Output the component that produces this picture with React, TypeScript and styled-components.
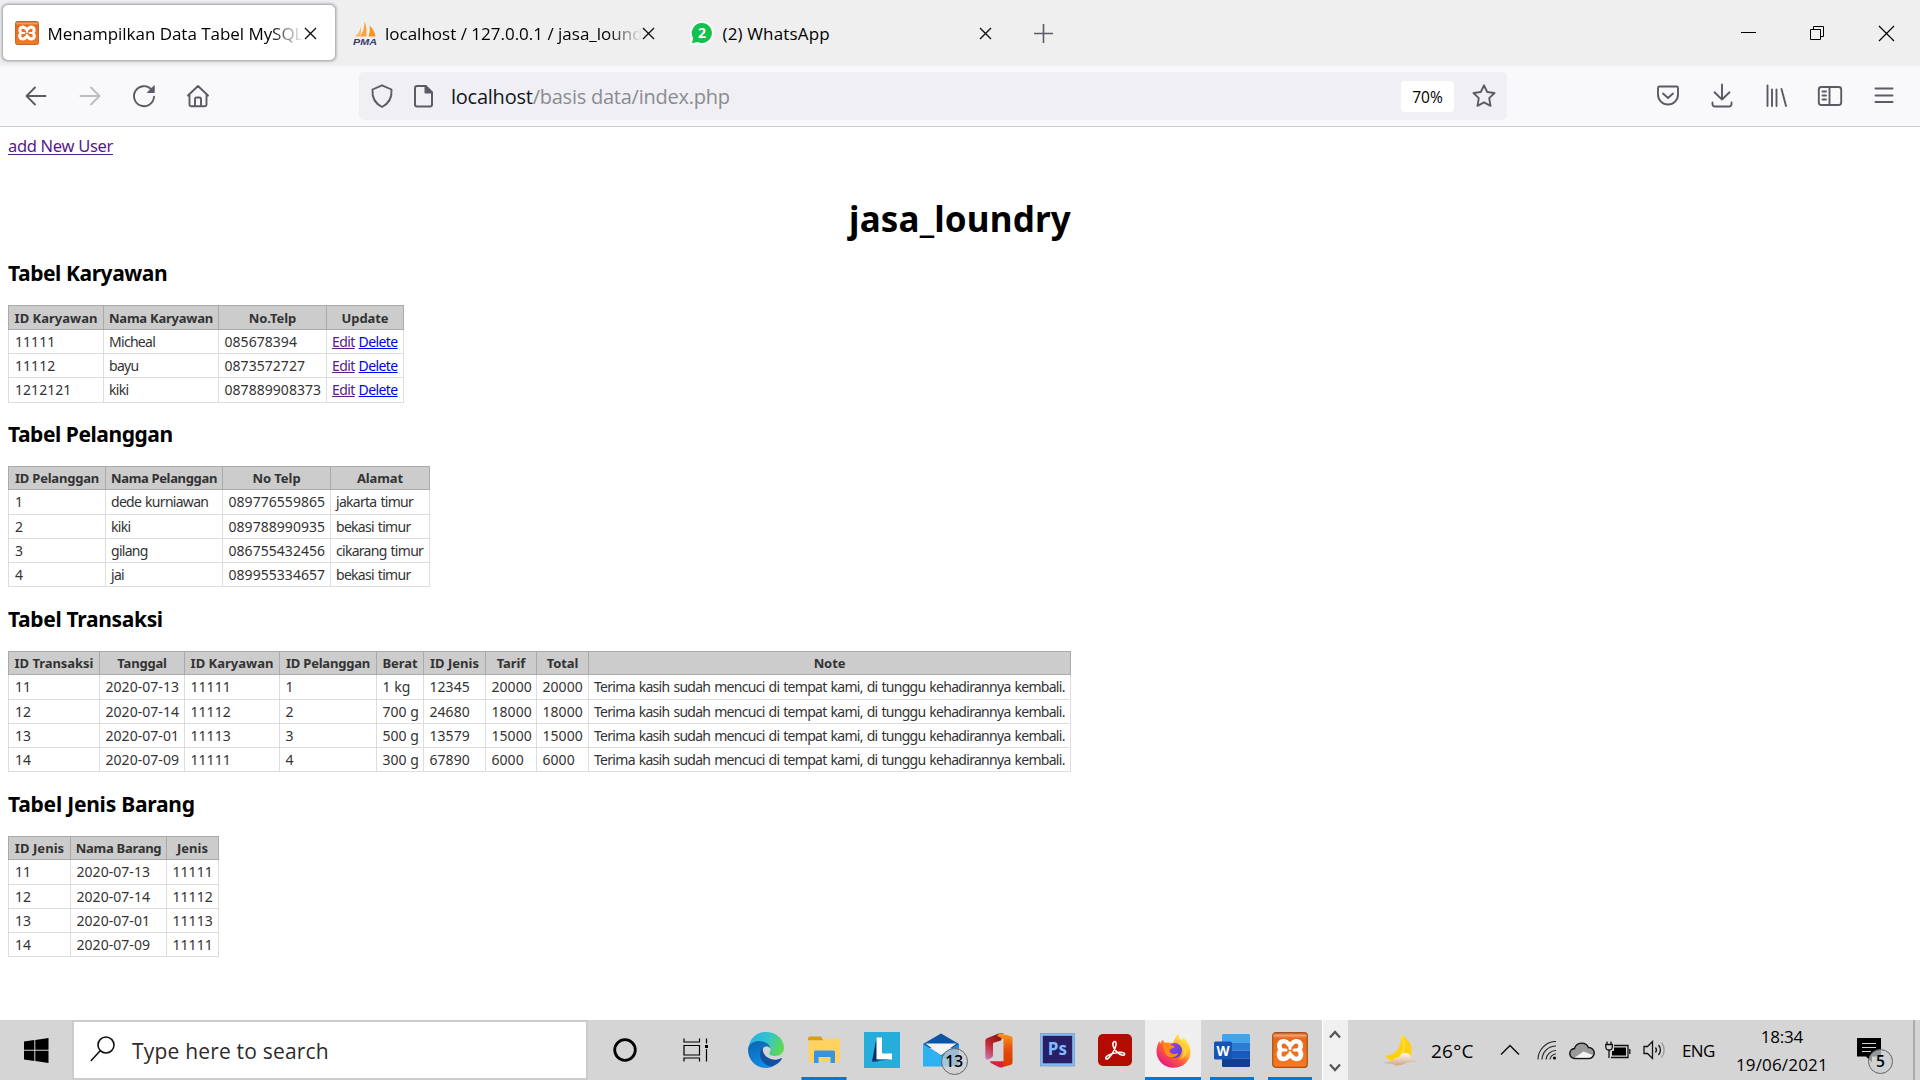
import React from "react";
import styled, { createGlobalStyle, css } from "styled-components";

const UI = `"Open Sans", "Noto Sans", sans-serif`;
const DOC = `"Noto Sans", "Open Sans", sans-serif`;

const Global = createGlobalStyle`
  *, *::before, *::after { box-sizing: border-box; }
  html, body { margin: 0; padding: 0; }
  body { width: 1920px; height: 1080px; overflow: hidden; background: #fff; }
  svg { display: block; flex: none; }
`;

const Screen = styled.div`
  display: flex;
  flex-direction: column;
  width: 1920px;
  height: 1080px;
  font-family: ${UI};
  color: #000;
`;

/* ---------- tab strip ---------- */
const TabStrip = styled.div`
  display: flex;
  height: 66px;
  background: #efefef;
  padding: 5px 0 5px 3px;
`;
const Tab = styled.div<{ $active?: boolean }>`
  display: flex;
  align-items: center;
  width: 332px;
  height: 55px;
  margin-right: 5.5px;
  padding: 1px 18px 0 12px;
  border-radius: 5px;
  ${(p) => p.$active && css`background: #fff; box-shadow: 0 0 3px 0.5px rgba(90, 90, 110, 0.6);`}
`;
const TabTitle = styled.div<{ $fade?: boolean; $ls?: number }>`
  flex: 1;
  overflow: hidden;
  margin-left: 8.5px;
  padding-top: 1px;
  font-size: 17px;
  line-height: 26px;
  letter-spacing: ${(p) => p.$ls ?? 0}px;
  white-space: nowrap;
  ${(p) => p.$fade && css`mask-image: linear-gradient(to right, #000 calc(100% - 34px), transparent 100%);`}
`;
const NewTab = styled.div`
  display: flex;
  align-items: center;
  margin-left: 18px;
  padding-top: 1px;
`;
const WindowControls = styled.div`
  display: flex;
  align-items: center;
  gap: 53px;
  margin-left: auto;
  padding-right: 25px;
`;

/* ---------- toolbar ---------- */
const Toolbar = styled.div`
  display: flex;
  align-items: center;
  height: 61px;
  padding: 0 20px 0 20px;
  background: #f9f9fb;
  border-bottom: 1px solid #cccccf;
`;
const NavButtons = styled.div`
  display: flex;
  gap: 22px;
  width: 339px;
`;
const UrlBar = styled.div`
  display: flex;
  align-items: center;
  width: 1148px;
  height: 48px;
  padding: 0 7px 0 7px;
  border-radius: 5px;
  background: #f0f0f4;
`;
const Address = styled.div`
  margin-left: 11px;
  padding-top: 2px;
  font-size: 20px;
  line-height: 28px;
  letter-spacing: -0.24px;
  color: #15141a;
  white-space: pre;
  span { color: #8b8b90; }
`;
const Zoom = styled.div`
  width: 53px;
  height: 31px;
  margin: 0 14px 0 auto;
  border-radius: 4px;
  background: #fff;
  font-size: 15.5px;
  line-height: 32px;
  text-align: center;
`;
const ToolButtons = styled.div`
  display: flex;
  gap: 22px;
  margin-left: auto;
`;

/* ---------- document ---------- */
const Doc = styled.main`
  flex: 1;
  padding: 0 8px;
  font-family: ${DOC};
  background: #fff;
`;
const AddLink = styled.a`
  display: block;
  width: max-content;
  padding-top: 8px;
  font-size: 16.5px;
  line-height: 22px;
  letter-spacing: -0.31px;
  color: #551a8b;
  text-decoration: underline;
  text-underline-offset: 2px;
`;
const Title = styled.h1`
  margin: 39px 0 0;
  font-size: 35px;
  line-height: 46px;
  letter-spacing: 0.17px;
  text-align: center;
`;
const Section = styled.section<{ $gap: number }>`
  margin-top: ${(p) => p.$gap}px;
`;
const Heading = styled.h2<{ $ls: number }>`
  margin: 0 0 19px;
  font-size: 21px;
  line-height: 26px;
  letter-spacing: ${(p) => p.$ls}px;
`;
const Table = styled.table`
  table-layout: fixed;
  border-spacing: 0;
  color: #333;
  white-space: nowrap;
`;
const Th = styled.th<{ $h: number; $ls: number }>`
  height: ${(p) => p.$h}px;
  padding: 0;
  background: #ccc;
  border: solid #aaa;
  border-width: 1px 1px 1px 0;
  font-size: 13px;
  line-height: 18px;
  letter-spacing: ${(p) => p.$ls}px;
  text-align: center;
  &:first-child { border-left-width: 1px; }
`;
const Td = styled.td<{ $h: number; $text: boolean }>`
  height: ${(p) => p.$h}px;
  padding: 0 0 0 ${(p) => (p.$text ? 5 : 5.5)}px;
  border: solid #ddd;
  border-width: 0 1px 1px 0;
  font-size: 14px;
  line-height: 18px;
  letter-spacing: ${(p) => (p.$text ? -0.71 : 0.04)}px;
  word-spacing: ${(p) => (p.$text ? 1 : 0)}px;
  &:first-child { border-left-width: 1px; padding-left: 6px; }
`;
const CellLink = styled.a<{ $visited?: boolean }>`
  letter-spacing: -0.6px;
  color: ${(p) => (p.$visited ? "#551a8b" : "#0000ee")};
  text-decoration: underline;
`;

/* ---------- taskbar ---------- */
const Taskbar = styled.footer`
  display: flex;
  height: 60px;
  background: #d5d5d5;
`;
const Slot = styled.div<{ $w: number }>`
  display: flex;
  align-items: center;
  justify-content: center;
  flex: none;
  width: ${(p) => p.$w}px;
`;
const Search = styled.div`
  display: flex;
  align-items: center;
  width: 516px;
  height: 60px;
  padding: 0 0 0 16px;
  border: 2px solid #ccc;
  background: #fff;
  font-size: 21px;
  letter-spacing: 0.19px;
  color: #2b2b2b;
  svg { margin-top: -2px; }
  span { margin: 2px 0 0 17px; }
`;
const Apps = styled.div`
  display: flex;
  margin-left: 6px;
`;
const App_ = styled.div<{ $active?: boolean; $bar?: number }>`
  position: relative;
  display: flex;
  align-items: center;
  justify-content: center;
  width: 56px;
  margin: 0 1.1px;
  ${(p) => p.$active && css`background: #efefef;`}
  &::after {
    content: "";
    position: absolute;
    bottom: 0;
    left: 50%;
    width: ${(p) => p.$bar ?? 0}px;
    height: 3px;
    transform: translateX(-50%);
    background: #0078d7;
  }
`;
const Badge = styled.span<{ $x: number; $y: number; $d: number }>`
  position: absolute;
  left: ${(p) => p.$x}px;
  top: ${(p) => p.$y}px;
  width: ${(p) => p.$d}px;
  height: ${(p) => p.$d}px;
  border: 1px solid #666;
  border-radius: 50%;
  background: rgba(205, 208, 210, 0.72);
  font-size: 15.5px;
  font-weight: 600;
  line-height: ${(p) => p.$d - 2}px;
  text-align: center;
`;
const Overflow = styled.div`
  display: flex;
  flex-direction: column;
  align-items: center;
  justify-content: space-between;
  width: 26px;
  margin-left: 3px;
  padding: 10px 0 8px;
  background: #f0f0f0;
  border-left: 1px solid #fff;
`;
const Tray = styled.div`
  display: flex;
  align-items: center;
  flex: 1;
  padding-left: 35px;
`;
const TrayText = styled.div<{ $w: number; $size: number; $ls: number }>`
  flex: none;
  width: ${(p) => p.$w}px;
  padding-top: 1px;
  font-size: ${(p) => p.$size}px;
  letter-spacing: ${(p) => p.$ls}px;
  white-space: nowrap;
`;
const Clock = styled.div`
  display: flex;
  flex-direction: column;
  align-items: center;
  width: 134px;
  padding-top: 1px;
  font-size: 17px;
  line-height: 28px;
  span:first-child { letter-spacing: -0.25px; }
  span:last-child { letter-spacing: 0.17px; }
`;
const Notice = styled.div`
  position: relative;
  width: 44px;
  height: 60px;
  padding-top: 18px;
`;
const ShowDesktop = styled.div`
  width: 7px;
  height: 60px;
  margin-left: auto;
  border-left: 2px solid #aaa;
`;

/* ---------- icons ---------- */
const Nav = ({ children, c = "#5b5b66" }: { children: React.ReactNode; c?: string }) => (
  <svg width="32" height="32" viewBox="0 0 32 32" fill="none" stroke={c} strokeWidth="1.9" strokeLinecap="round" strokeLinejoin="round">
    {children}
  </svg>
);

const Xampp = ({ size }: { size: number }) => (
  <svg width={size} height={size} viewBox="0 0 36 36">
    <defs>
      <linearGradient id="xg" x1="0" y1="0" x2="0" y2="1">
        <stop offset="0" stopColor="#c4652a" />
        <stop offset="0.08" stopColor="#f0a070" />
        <stop offset="0.16" stopColor="#e8681a" />
        <stop offset="1" stopColor="#f57a20" />
      </linearGradient>
    </defs>
    <rect x="0.7" y="0.7" width="34.6" height="34.6" rx="3" fill="url(#xg)" stroke="#a9501a" strokeWidth="1.2" />
    <g fill="none" stroke="#fff" strokeWidth="4.600" strokeLinecap="round" strokeLinejoin="round">
      <path d="M18 13.200C16.500 13.200 16 9.500 12.200 9.200C7.500 9 5.800 13.500 8.800 17.800C5.500 22 7 27.200 12 27C16 26.800 16.300 23 18 23C19.700 23 20 26.800 24 27C29 27.200 30.500 22 27.200 17.800C30.200 13.500 28.500 9 23.800 9.200C20 9.500 19.500 13.200 18 13.200z" />
      <path d="M10 18.100h4M22 18.100h4" strokeWidth="3" />
      <path d="M18 13v3.500M18 23v-2.500" strokeWidth="3" />
    </g>
  </svg>
);

const Pma = () => (
  <svg width="24" height="24" viewBox="0 0 24 24">
    <path d="M11.500 0.500c2 4 2.500 9 1.800 15H7c3-4 4.500-9 4.500-15z" fill="#f9a13a" />
    <path d="M7.500 5.500c0 4-2 7.500-6 10h5.500c1.200-3 1.300-6.500.5-10z" fill="#fbb560" />
    <path d="M16.500 4.500c3.500 3 5.500 7 6 11h-7c1.300-3.500 1.600-7 1-11z" fill="#f7941e" />
    <text x="0" y="23.600" fontFamily="Liberation Sans, sans-serif" fontWeight="700" fontStyle="italic" fontSize="9.500" textLength="24" lengthAdjust="spacingAndGlyphs" fill="#3a3b6e">PMA</text>
  </svg>
);

const Whats = () => (
  <svg width="24" height="24" viewBox="0 0 24 24">
    <path d="M0 24V12A12 12 0 1 1 12 24z" fill="#fafafa" />
    <path d="M12 2a10 10 0 1 1-4.500 19L2 22.300l1.200-5.300A10 10 0 0 1 12 2z" fill="#12c14b" />
    <text x="12" y="17" textAnchor="middle" fontFamily="Open Sans, sans-serif" fontWeight="700" fontSize="14" fill="#fff">2</text>
  </svg>
);

const Close = () => (
  <svg width="13" height="13" viewBox="0 0 13 13" stroke="#111" strokeWidth="1.400"><path d="M1 1l11 11M12 1L1 12" /></svg>
);

const Edge = () => (
  <svg width="36" height="36" viewBox="0 0 36 36">
    <defs>
      <linearGradient id="e1" x1="0" y1="0.300" x2="1" y2="0.600">
        <stop offset="0" stopColor="#27b0ee" /><stop offset="0.500" stopColor="#35c4c8" /><stop offset="1" stopColor="#62da4e" />
      </linearGradient>
      <linearGradient id="e2" x1="0" y1="0" x2="0.400" y2="1">
        <stop offset="0" stopColor="#0d63ae" /><stop offset="1" stopColor="#0f8be6" />
      </linearGradient>
    </defs>
    <path d="M0.500 15.500C1.800 6.500 9 0 18 0c10.500 0 18 7.500 18 15.500c0 5.500-4 8.500-8.500 8.500c-5 0-6.500-1.800-6.300-2.800c.3-1 1.300-1.800 1.300-4.200c0-3.500-4-6.500-9.500-7C7.500 9.500 2.500 12 .5 15.500z" fill="url(#e1)" />
    <path d="M0 18C0 12.500 5 9 11 9c6 0 11 3 11.500 7.500c-4-4-8.500-1.500-8.500 3.500c0 8 7 14 14.500 11.500C25.500 34.500 22 36 18 36C8 36 0 28 0 18z" fill="url(#e2)" />
    <path d="M14.500 15.500c-3 3.500-3.300 10 .5 14.500c3 3.500 7 5 10 4c3.500-1.300 7-4 8.800-7c.3-.8-.4-1.100-1-.8c-3 1.600-6.500 1.900-9.800.9c-5.500-1.700-8.500-6-8.500-11.600z" fill="#124f9c" />
  </svg>
);

const Explorer = () => (
  <svg width="33" height="28" viewBox="0 0 33 28">
    <path d="M0 2.500A2 2 0 0 1 2 .5h11l2.500 4H0z" fill="#dd9c0a" />
    <path d="M.5 4.500h14L17 2.500h15v22a1.500 1.500 0 0 1-1.500 1.500H2A1.500 1.500 0 0 1 .5 24.500z" fill="#ffd262" />
    <path d="M6 27V16a1.500 1.500 0 0 1 1.500-1.500h18A1.500 1.500 0 0 1 27 16v11h-4.500v-6h-12v6z" fill="#3b93dd" />
  </svg>
);

const LinkApp = () => (
  <svg width="36" height="36" viewBox="0 0 36 36">
    <rect width="36" height="36" fill="#27addb" />
    <path d="M12.500 5.500L8 29.500h6z" fill="#0a2d66" />
    <path d="M12.500 5.500H18V21.500h10V27.500H12.500z" fill="#fff" />
    <path d="M8 29.500l4.500-2h14z" fill="#0a4a86" />
  </svg>
);

const Mail = () => (
  <svg width="36" height="34" viewBox="0 0 36 34">
    <path d="M0 11L18 .5L36 11v4H0z" fill="#0b55a6" />
    <path d="M0 11v22h36V11L18 22z" fill="#2aa7ea" />
    <path d="M18 22L36 11v22.500L9 27.500z" fill="#188adb" />
    <path d="M2.500 10.500h31L18 22z" fill="#f4f4f4" />
    <path d="M0 33.500V11l25 16.500v6z" fill="#2fb0f0" />
  </svg>
);

const Office = () => (
  <svg width="28" height="35" viewBox="0 0 28 35">
    <defs>
      <linearGradient id="o1" x1="0.500" y1="0" x2="0" y2="1">
        <stop offset="0" stopColor="#8c1414" /><stop offset="0.500" stopColor="#c8303c" /><stop offset="1" stopColor="#c682c8" />
      </linearGradient>
      <linearGradient id="o2" x1="0" y1="0" x2="0" y2="1">
        <stop offset="0" stopColor="#fb9a1c" /><stop offset="0.500" stopColor="#e44a0b" /><stop offset="1" stopColor="#d83b01" />
      </linearGradient>
    </defs>
    <path d="M14.500.3L2.500 5C1 5.600.3 6.500.3 8v16.500c0 2 2 2.600 3.500 1.800l3-1.800c.8-.5 1.200-1.200 1.200-2V10l8-2.500L18.500.5z" fill="url(#o1)" />
    <path d="M14.500.3L25.500 3C27 3.500 27.500 4.300 27.500 5.500v24c0 1.200-.6 2-2 2.500L16 34.500l2.500-6V6L12 3z" fill="url(#o2)" />
    <path d="M5.500 28.200h13v5c-1.500 1.500-3.500 1.500-5 .8L6 30c-1-.6-1.300-1.400-.5-1.800z" fill="#dc1f3c" />
  </svg>
);

const Ps = () => (
  <svg width="35" height="35" viewBox="0 0 35 35">
    <rect x="0.500" y="0.500" width="34" height="32.500" fill="#82bdf4" stroke="#6c8fb5" strokeWidth="0.600" />
    <rect x="2.800" y="2.800" width="29.400" height="27.500" fill="#291f66" />
    <text x="17.300" y="22" textAnchor="middle" fontFamily="Open Sans, sans-serif" fontWeight="700" fontSize="17" fill="#7fbcff">Ps</text>
  </svg>
);

const Acrobat = () => (
  <svg width="34" height="33" viewBox="0 0 34 33">
    <rect width="34" height="32" rx="5" fill="#b30b00" />
    <path d="M15.500 8.200c1.800-1.800 3.200.3 2.300 3.600C16.700 16 13 22 10 24.500c-1.800 1.300-3.300-.2-1.500-2c3-2.700 11-4.500 15.500-4c3.500.5 3.300 3 .5 2.700c-3.500-.5-8-4.700-9.300-9c-.5-1.800-.5-3.300.3-4z" fill="none" stroke="#fff" strokeWidth="1.600" />
  </svg>
);

const Firefox = () => (
  <svg width="35" height="35" viewBox="0 0 35 35">
    <defs>
      <linearGradient id="f1" x1="0.850" y1="0.100" x2="0.200" y2="0.950">
        <stop offset="0" stopColor="#fff44f" /><stop offset="0.350" stopColor="#ffb02c" /><stop offset="0.600" stopColor="#ff5a3c" /><stop offset="1" stopColor="#e31587" />
      </linearGradient>
      <linearGradient id="f2" x1="0" y1="0" x2="1" y2="1">
        <stop offset="0" stopColor="#b833e1" /><stop offset="0.500" stopColor="#7542e5" /><stop offset="1" stopColor="#4a3fd6" />
      </linearGradient>
    </defs>
    <path d="M22.500.5c-.3 3 .8 4.500 3 6.800c.8-1 1.300-1.500 1.600-2.700c4.500 3.500 7.400 8.400 7.400 14.400C34.500 28 27 34.800 17.500 34.800S.5 27.500.5 18.500c0-4.500 1.200-7.500 3-10.500c.2 1 .3 1.700.8 2.500C5 8.800 5.800 7.500 7 6.500c.3 1.800 1.300 3.200 3 3.300c2-.4 4.300-.4 6.500.7c2-3 2.500-7 6-10z" fill="url(#f1)" />
    <circle cx="18.500" cy="17.500" r="7.500" fill="url(#f2)" />
    <path d="M7 11c3-1.800 6.500-1 9 1.500c1.500.2 2.500.6 2.500 1.300c0 1.400-3 2-4.500 2.500c-.8 1.700-.2 3.500 2 4.400c2.500 1 4.500-.6 6.500-.2c-2.500 4.500-8.500 5-12 1.500C7.700 19 7.500 15 7 11z" fill="#ff8a16" />
    <path d="M22 5c.5 4 5.500 6 5.500 12.500c0 4.500-2 7.500-5 9.500c7-2 10.500-8 9-14.500C30 15 28.500 15 28 12C25.500 10 23 8 22 5z" fill="#ffd43a" opacity="0.800" />
  </svg>
);

const Word = () => (
  <svg width="36" height="33" viewBox="0 0 36 33">
    <path d="M8 1.500A1.500 1.500 0 0 1 9.500 0h25A1.500 1.500 0 0 1 36 1.500V8.500H8z" fill="#41a5ee" />
    <rect x="8" y="8.500" width="28" height="8" fill="#2b7cd3" />
    <rect x="8" y="16.500" width="28" height="8" fill="#185abd" />
    <path d="M8 24.500h28V31.500a1.500 1.500 0 0 1-1.500 1.500h-25A1.500 1.500 0 0 1 8 31.500z" fill="#103f91" />
    <rect x="0" y="7.500" width="18" height="18" rx="1.500" fill="#1753b2" />
    <text x="9" y="21.500" textAnchor="middle" fontFamily="Open Sans, sans-serif" fontWeight="700" fontSize="13.500" fill="#fff">W</text>
  </svg>
);

const Moon = () => (
  <svg width="36" height="33" viewBox="0 0 36 33">
    <defs>
      <linearGradient id="cl" x1="0" y1="0" x2="0" y2="1"><stop offset="0" stopColor="#fff8ea" /><stop offset="1" stopColor="#cfa68c" /></linearGradient>
    </defs>
    <path d="M18 1c13 6 14 22 4 26c-7 2.500-16 1-20-5.500C11 22 19 15 18 1z" fill="#ffd00f" />
    <path d="M18 1c5 8 4 17-3 24" fill="none" stroke="#ffe24a" strokeWidth="1.500" />
    <path d="M1 29c5-1.500 7-2 9-2.500c1-2.500 4-3.500 6.500-2.500c-.5-3 4-6 8-4.500c4 1.200 4 4.500 3 6.500c3 0 5 .2 8 .5c-4 1.600-8 1.800-12 2.500c-3 1.200-6 2.500-10 2.500c-3 0-2-1-4-1.500c-3-.3-5 0-8.500-1z" fill="url(#cl)" />
  </svg>
);

/* ---------- data ---------- */
type Grid = { title: string; gap: number; ls: number; cols: number[]; rows: number[]; head: [string, number][]; data: string[][] };

const NOTE = "Terima kasih sudah mencuci di tempat kami, di tunggu kehadirannya kembali.";

const grids: Grid[] = [
  {
    title: "Tabel Karyawan", gap: 18, ls: -0.43, cols: [96, 115, 108, 77], rows: [25, 24, 24, 25],
    head: [["ID Karyawan", 0], ["Nama Karyawan", -0.23], ["No.Telp", -0.05], ["Update", -0.1]],
    data: [["11111", "Micheal", "085678394", "@"], ["11112", "bayu", "0873572727", "@"], ["1212121", "kiki", "087889908373", "@"]],
  },
  {
    title: "Tabel Pelanggan", gap: 18, ls: -0.45, cols: [98, 117, 108, 99], rows: [24, 25, 24, 24, 24],
    head: [["ID Pelanggan", -0.2], ["Nama Pelanggan", -0.34], ["No Telp", -0.05], ["Alamat", -0.1]],
    data: [["1", "dede kurniawan", "089776559865", "jakarta timur"], ["2", "kiki", "089788990935", "bekasi timur"], ["3", "gilang", "086755432456", "cikarang timur"], ["4", "jai", "089955334657", "bekasi timur"]],
  },
  {
    title: "Tabel Transaksi", gap: 19, ls: -0.33, cols: [92, 85, 95, 97, 47, 62, 51, 52, 482], rows: [24, 25, 24, 24, 24],
    head: [["ID Transaksi", -0.05], ["Tanggal", -0.2], ["ID Karyawan", 0], ["ID Pelanggan", -0.2], ["Berat", -0.1], ["ID Jenis", 0], ["Tarif", -0.1], ["Total", -0.1], ["Note", -0.1]],
    data: [
      ["11", "2020-07-13", "11111", "1", "1 kg", "12345", "20000", "20000", NOTE],
      ["12", "2020-07-14", "11112", "2", "700 g", "24680", "18000", "18000", NOTE],
      ["13", "2020-07-01", "11113", "3", "500 g", "13579", "15000", "15000", NOTE],
      ["14", "2020-07-09", "11111", "4", "300 g", "67890", "6000", "6000", NOTE],
    ],
  },
  {
    title: "Tabel Jenis Barang", gap: 19, ls: -0.23, cols: [63, 96, 52], rows: [24, 25, 24, 24, 24],
    head: [["ID Jenis", 0.05], ["Nama Barang", -0.27], ["Jenis", 0]],
    data: [["11", "2020-07-13", "11111"], ["12", "2020-07-14", "11112"], ["13", "2020-07-01", "11113"], ["14", "2020-07-09", "11111"]],
  },
];

const DataTable = ({ g }: { g: Grid }) => (
  <Section $gap={g.gap}>
    <Heading $ls={g.ls}>{g.title}</Heading>
    <Table style={{ width: g.cols.reduce((a, b) => a + b, 0) }}>
      <colgroup>{g.cols.map((w, i) => <col key={i} style={{ width: w }} />)}</colgroup>
      <thead>
        <tr>{g.head.map(([h, ls]) => <Th key={h} $h={g.rows[0]} $ls={ls}>{h}</Th>)}</tr>
      </thead>
      <tbody>
        {g.data.map((r, i) => (
          <tr key={i}>
            {r.map((c, j) => (
              <Td key={j} $h={g.rows[i + 1]} $text={/[a-z@]{3}|@/i.test(c)}>
                {c === "@" ? <><CellLink $visited>Edit</CellLink>{" "}<CellLink>Delete</CellLink></> : c}
              </Td>
            ))}
          </tr>
        ))}
      </tbody>
    </Table>
  </Section>
);

export default function App() {
  return (
    <Screen>
      <Global />
      <TabStrip>
        <Tab $active><Xampp size={24} /><TabTitle $fade $ls={-0.04}>Menampilkan Data Tabel MySQL</TabTitle><Close /></Tab>
        <Tab><Pma /><TabTitle $fade>localhost / 127.0.0.1 / jasa_loundry</TabTitle><Close /></Tab>
        <Tab><Whats /><TabTitle $ls={0.15}>(2) WhatsApp</TabTitle><Close /></Tab>
        <NewTab>
          <svg width="19" height="19" viewBox="0 0 19 19" stroke="#5b5b66" strokeWidth="1.600"><path d="M9.500 0v19M0 9.500h19" /></svg>
        </NewTab>
        <WindowControls>
          <svg width="16" height="16" viewBox="0 0 16 16" stroke="#000" strokeWidth="1"><path d="M1 7.500h15" /></svg>
          <svg width="16" height="16" viewBox="0 0 16 16" stroke="#000" strokeWidth="1" fill="none"><path d="M1.500 4.500h10v10h-10zM4.500 4.500v-3h10v10h-3" /></svg>
          <svg width="17" height="17" viewBox="0 0 17 17" stroke="#000" strokeWidth="1.200"><path d="M1 1l15 15M16 1L1 16" /></svg>
        </WindowControls>
      </TabStrip>
      <Toolbar>
        <NavButtons>
          <Nav><path d="M25.500 16H6.500M15 7.500L6.500 16L15 24.500" /></Nav>
          <Nav c="#bcbcc2"><path d="M6.500 16H25.500M17 7.500L25.500 16L17 24.500" /></Nav>
          <Nav><path d="M23.300 9.300A10 10 0 1 0 26 16.800" /><path d="M26.200 6v6.500h-6.500z" fill="#5b5b66" strokeWidth="1" /></Nav>
          <Nav><path d="M6 15.500L16 6L26 15.500M7.500 14.500v10a1.800 1.800 0 0 0 1.800 1.800h13.400a1.800 1.800 0 0 0 1.800-1.800V14.500M13 26v-7a1.500 1.500 0 0 1 1.500-1.500h3A1.500 1.500 0 0 1 19 19v7" /></Nav>
        </NavButtons>
        <UrlBar>
          <Nav><path d="M16 5.300L25.500 9.500c.5 7-2.500 14-9.500 17.500C9 23.500 6 16.500 6.500 9.500z" /></Nav>
          <svg width="42" height="32" viewBox="0 0 42 32" fill="none" stroke="#5b5b66" strokeWidth="2" strokeLinejoin="round">
            <path d="M19 6h8.500L34 12.500v12a2 2 0 0 1-2 2H19a2 2 0 0 1-2-2V8a2 2 0 0 1 2-2z" />
            <path d="M27.500 6v6.500H34z" fill="#5b5b66" />
          </svg>
          <Address>localhost<span>/basis data/index.php</span></Address>
          <Zoom>70%</Zoom>
          <Nav><path d="M16 5.300l3.200 6.700l7.300 1l-5.300 5.100l1.300 7.700L16 22.300l-6.500 3.500l1.300-7.700L5.500 13l7.300-1z" /></Nav>
        </UrlBar>
        <ToolButtons>
          <Nav><path d="M7.500 6.500h17a1.500 1.500 0 0 1 1.500 1.500V14.500a10 10 0 0 1-20 0V8A1.500 1.500 0 0 1 7.500 6.500zM11 13.500l5 4.500l5-4.500" /></Nav>
          <Nav><path d="M16 4.500v15M8.500 12.300L16 19.500l7.500-7.200M6.500 22.500v1.500a2.500 2.500 0 0 0 2.500 2.500h14a2.500 2.500 0 0 0 2.500-2.500v-1.500" /></Nav>
          <Nav><path d="M7.500 5.500v20.500M12 9.500v16.500M16.500 9.500v16.500M21.500 9l4.500 17" /></Nav>
          <Nav><rect x="4.800" y="7" width="22.400" height="18" rx="2.500" /><path d="M15.500 7v18M8.500 11.500h3.500M8.500 15.500h3.500M8.500 19.500h3.500" /></Nav>
          <Nav><path d="M7.500 8.500h17M7.500 15.500h17M7.500 22h17" /></Nav>
        </ToolButtons>
      </Toolbar>
      <Doc>
        <AddLink>add New User</AddLink>
        <Title>jasa_loundry</Title>
        {grids.map((g) => <DataTable key={g.title} g={g} />)}
      </Doc>
      <Taskbar>
        <Slot $w={72}>
          <svg width="25" height="25" viewBox="0 0 25 25"><path d="M0 3.500L10.300 2v9.800H0zM11.300 1.900L24.500 0v11.800H11.300zM0 12.800h10.300V23L0 21.500zM11.300 12.800h13.200V25L11.300 23.100z" /></svg>
        </Slot>
        <Search>
          <svg width="25" height="26" viewBox="0 0 25 26" fill="none" stroke="#111" strokeWidth="1.600"><circle cx="16" cy="9" r="8" /><path d="M10.200 14.800L.8 25" /></svg>
          <span>Type here to search</span>
        </Search>
        <Slot $w={73}>
          <svg width="26" height="26" viewBox="0 0 26 26" fill="none"><circle cx="13" cy="13" r="10.300" stroke="#000" strokeWidth="2.800" /></svg>
        </Slot>
        <Slot $w={70}>
          <svg width="26" height="24" viewBox="0 0 26 24" fill="none" stroke="#000" strokeWidth="1.200"><path d="M1 .5v3.500h15.500V.5M1 7.500h15.500v9.500H1zM1 23.500V20h15.500v3.500M23.500.5v5M23.500 11v12.500" /><path d="M22 7h3v3h-3z" fill="#000" stroke="none" /></svg>
        </Slot>
        <Apps>
          <App_><Edge /></App_>
          <App_ $bar={45}><Explorer /></App_>
          <App_><LinkApp /></App_>
          <App_><Mail /><Badge $x={28} $y={28} $d={27}>13</Badge></App_>
          <App_><Office /></App_>
          <App_><Ps /></App_>
          <App_><Acrobat /></App_>
          <App_ $active $bar={56}><Firefox /></App_>
          <App_ $bar={44}><Word /></App_>
          <App_ $bar={44}><Xampp size={36} /></App_>
        </Apps>
        <Overflow>
          <svg width="12" height="9" viewBox="0 0 12 9" fill="none" stroke="#555" strokeWidth="2.200"><path d="M1 7.500L6 2l5 5.500" /></svg>
          <svg width="12" height="9" viewBox="0 0 12 9" fill="none" stroke="#555" strokeWidth="2.200"><path d="M1 1.500L6 7l5-5.500" /></svg>
        </Overflow>
        <Tray>
          <Slot $w={36}><Moon /></Slot>
          <Slot $w={12} />
          <TrayText $w={63} $size={19} $ls={0.29}>26°C</TrayText>
          <Slot $w={32}><svg width="20" height="12" viewBox="0 0 20 12" fill="none" stroke="#111" strokeWidth="1.500"><path d="M1 10.500L10 1.500l9 9" /></svg></Slot>
          <Slot $w={42}>
            <svg width="20" height="20" viewBox="0 0 20 20" fill="none" stroke="#222" strokeWidth="1.100">
              <path d="M1 19.500A18 18 0 0 1 19 1.500M5 19.500A14 14 0 0 1 19 6M9 19.500A10 10 0 0 1 19 10.500M13 19.500A6 6 0 0 1 19 14" />
              <circle cx="17.500" cy="18" r="1.600" fill="#111" stroke="none" />
            </svg>
          </Slot>
          <Slot $w={28}>
            <svg width="26" height="19" viewBox="0 0 26 19">
              <path d="M6 17.500a5 5 0 0 1-.5-10A7.500 7.500 0 0 1 19.500 6.500a5.500 5.500 0 0 1 .5 11z" fill="#999" stroke="#111" strokeWidth="1.400" />
              <path d="M5.500 16.800L14.500 10.500L23.500 14c-.7 1.800-2 2.800-4 2.800z" fill="#f2f2f2" />
            </svg>
          </Slot>
          <Slot $w={44}>
            <svg width="26" height="18" viewBox="0 0 26 18" fill="none" stroke="#111" strokeWidth="1.300">
              <path d="M9 4.500h14v12H6M24.800 8v5" /><path d="M9 6.500h12v8H7V10h2z" fill="#000" stroke="none" />
              <path d="M2 .5v3M6 .5v3M.8 3.500h6.500v3a3 3 0 0 1-2 2.500H2.800a3 3 0 0 1-2-2.500zM4 9v8" fill="none" />
            </svg>
          </Slot>
          <Slot $w={30}>
            <svg width="24" height="20" viewBox="0 0 24 20" fill="none" stroke="#111" strokeWidth="1.300">
              <path d="M1 6.500h3.500L9.500 1.500v17L4.500 13.500H1z" /><path d="M12.500 7.500a4 4 0 0 1 0 5M15.500 5a7.500 7.500 0 0 1 0 10" /><path d="M18.500 2.500a12 12 0 0 1 0 15" stroke="#999" />
            </svg>
          </Slot>
          <Slot $w={12} />
          <TrayText $w={33} $size={17} $ls={-0.5}>ENG</TrayText>
          <Clock><span>18:34</span><span>19/06/2021</span></Clock>
          <Slot $w={8} />
          <Notice>
            <svg width="25" height="26" viewBox="0 0 25 26"><path d="M0 0h24v18.500H15v6L9 18.500H0z" /><path d="M5 5.500h14M5 9.500h14M5 13.500h9" stroke="#d5d5d5" strokeWidth="1.200" /></svg>
            <Badge $x={11} $y={29} $d={25}>5</Badge>
          </Notice>
          <ShowDesktop />
        </Tray>
      </Taskbar>
    </Screen>
  );
}
